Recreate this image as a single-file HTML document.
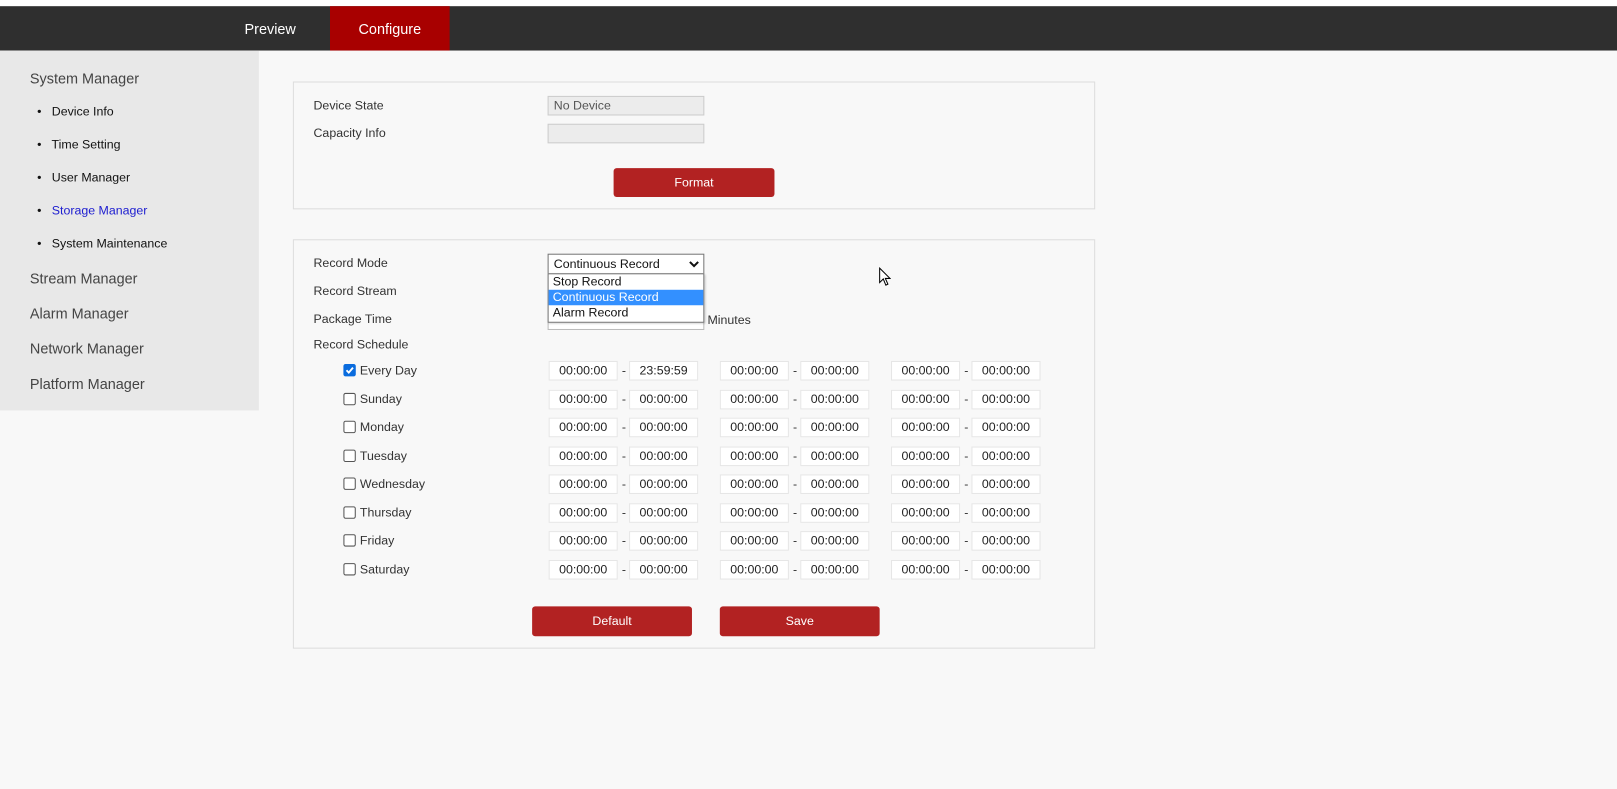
<!DOCTYPE html>
<html><head><meta charset="utf-8"><style>
*{margin:0;padding:0;box-sizing:border-box}
html,body{width:1617px;height:789px;overflow:hidden;background:#f8f8f8;font-family:"Liberation Sans",Arial,sans-serif}
#w{position:absolute;left:0;top:0;width:1568px;height:765px;transform:scale(1.03125);transform-origin:0 0;background:#f8f8f8}
.a{position:absolute;white-space:nowrap}
.t{font-size:12px;color:#333;line-height:14px}
.h{font-size:14px;color:#444;line-height:16px}
.ti{position:absolute;width:67px;height:19px;background:#fff;border:1px solid #e6e6e6;font-size:12px;color:#222;text-align:center;line-height:17px}
.btn{position:absolute;background:#b22222;border-radius:3px;color:#fff;font-size:12px;text-align:center}
.cb{position:absolute;left:333px;width:12px;height:12px;border:1px solid #555;border-radius:2px;background:#fff}
</style></head><body><div id="w">
<div class="a" style="left:0;top:0;width:1568px;height:6px;background:#fff"></div>
<div class="a" style="left:0;top:6px;width:1568px;height:43px;background:#2f2f2f"></div>
<div class="a" style="left:320px;top:6px;width:116px;height:43px;background:#a80000"></div>
<div class="a" style="left:205px;top:20px;width:114px;text-align:center;color:#fff;font-size:14px">Preview</div>
<div class="a" style="left:320px;top:20px;width:116px;text-align:center;color:#fff;font-size:14px">Configure</div>
<div class="a" style="left:0;top:49px;width:251px;height:349px;background:#e8e8e8"></div>
<div class="a h" style="left:29px;top:68px">System Manager</div>
<div class="a h" style="left:29px;top:262px">Stream Manager</div>
<div class="a h" style="left:29px;top:296px">Alarm Manager</div>
<div class="a h" style="left:29px;top:330px">Network Manager</div>
<div class="a h" style="left:29px;top:364px">Platform Manager</div>
<div class="a t" style="left:36px;top:101px;color:#111">•&nbsp;&nbsp; Device Info</div>
<div class="a t" style="left:36px;top:133px;color:#111">•&nbsp;&nbsp; Time Setting</div>
<div class="a t" style="left:36px;top:165px;color:#111">•&nbsp;&nbsp; User Manager</div>
<div class="a t" style="left:36px;top:197px;color:#111">•&nbsp;&nbsp; <span style="color:#2020d0">Storage Manager</span></div>
<div class="a t" style="left:36px;top:229px;color:#111">•&nbsp;&nbsp; System Maintenance</div>

<div class="a" style="left:284px;top:79px;width:778px;height:124px;border:1px solid #ddd"></div>
<div class="a t" style="left:304px;top:95px">Device State</div>
<div class="a t" style="left:304px;top:122px">Capacity Info</div>
<div class="a" style="left:531px;top:93px;width:152px;height:19px;background:#ececec;border:1px solid #ccc;font-size:12px;color:#555;padding-left:5px;line-height:17px">No Device</div>
<div class="a" style="left:531px;top:120px;width:152px;height:19px;background:#ececec;border:1px solid #ccc"></div>
<div class="btn" style="left:595px;top:163px;width:156px;height:28px;line-height:28px">Format</div>

<div class="a" style="left:284px;top:232px;width:778px;height:397px;border:1px solid #ddd"></div>
<div class="a t" style="left:304px;top:248px">Record Mode</div>
<div class="a t" style="left:304px;top:275px">Record Stream</div>
<div class="a t" style="left:304px;top:302px">Package Time</div>
<div class="a t" style="left:304px;top:327px">Record Schedule</div>
<div class="a" style="left:531px;top:301px;width:152px;height:19px;background:#fff;border:1px solid #bbb"></div>
<div class="a t" style="left:686px;top:303px">Minutes</div>
<div class="a" style="left:531px;top:246px;width:152px;height:20px;background:#fff;border:1px solid #767676;font-size:12px;color:#111;padding-left:5px;line-height:18px">Continuous Record
<svg style="position:absolute;right:4px;top:5px" width="10" height="8" viewBox="0 0 10 8"><path d="M1 2 L5 6 L9 2" stroke="#111" stroke-width="2" fill="none"/></svg></div>
<div class="a" style="left:531px;top:265px;width:152px;height:48px;background:#fff;border:1px solid #767676;font-size:12px;color:#111;line-height:15px;box-shadow:1px 1px 2px rgba(0,0,0,.2)">
<div style="padding-left:4px;height:15px">Stop Record</div>
<div style="padding-left:4px;height:15px;background:#3390ff;color:#fff">Continuous Record</div>
<div style="padding-left:4px;height:15px">Alarm Record</div></div>

<div id="rows"></div>
<div class="btn" style="left:516px;top:588px;width:155px;height:29px;line-height:29px">Default</div>
<div class="btn" style="left:698px;top:588px;width:155px;height:29px;line-height:29px">Save</div>
<svg class="a" style="left:852px;top:259px" width="12" height="19" viewBox="0 0 12 19"><path d="M1 1 L1 15 L4.5 11.5 L7 17.5 L9 16.5 L6.5 11 L11 11 Z" fill="#fff" stroke="#000" stroke-width="1"/></svg>
</div>
<script>
var ys=[359,387,414,442,469,497,524,552],n=["Every Day","Sunday","Monday","Tuesday","Wednesday","Thursday","Friday","Saturday"],xs=[[532,610,605],[698,776,771],[864,942,937]],h="";
ys.forEach(function(y,i){
h+='<div class="cb" style="top:'+(y-6)+'px;'+(i==0?'background:#0a6cde;border-color:#0a6cde':'')+'">'+(i==0?'<svg width="10" height="10" viewBox="0 0 10 10" style="position:absolute;left:0;top:0"><path d="M2 5 L4.2 7.3 L8.3 2.5" stroke="#fff" stroke-width="1.8" fill="none"/></svg>':'')+'</div>';
h+='<div class="a t" style="left:349px;top:'+(y-7)+'px">'+n[i]+'</div>';
xs.forEach(function(x,j){var b=(i==0&&j==0)?'23:59:59':'00:00:00';
h+='<div class="ti" style="left:'+x[0]+'px;top:'+(y-9)+'px">00:00:00</div><div class="a t" style="left:'+(x[2]-2)+'px;top:'+(y-7)+'px">-</div><div class="ti" style="left:'+x[1]+'px;top:'+(y-9)+'px">'+b+'</div>';});
});
document.getElementById('rows').innerHTML=h;
</script>
</body></html>
